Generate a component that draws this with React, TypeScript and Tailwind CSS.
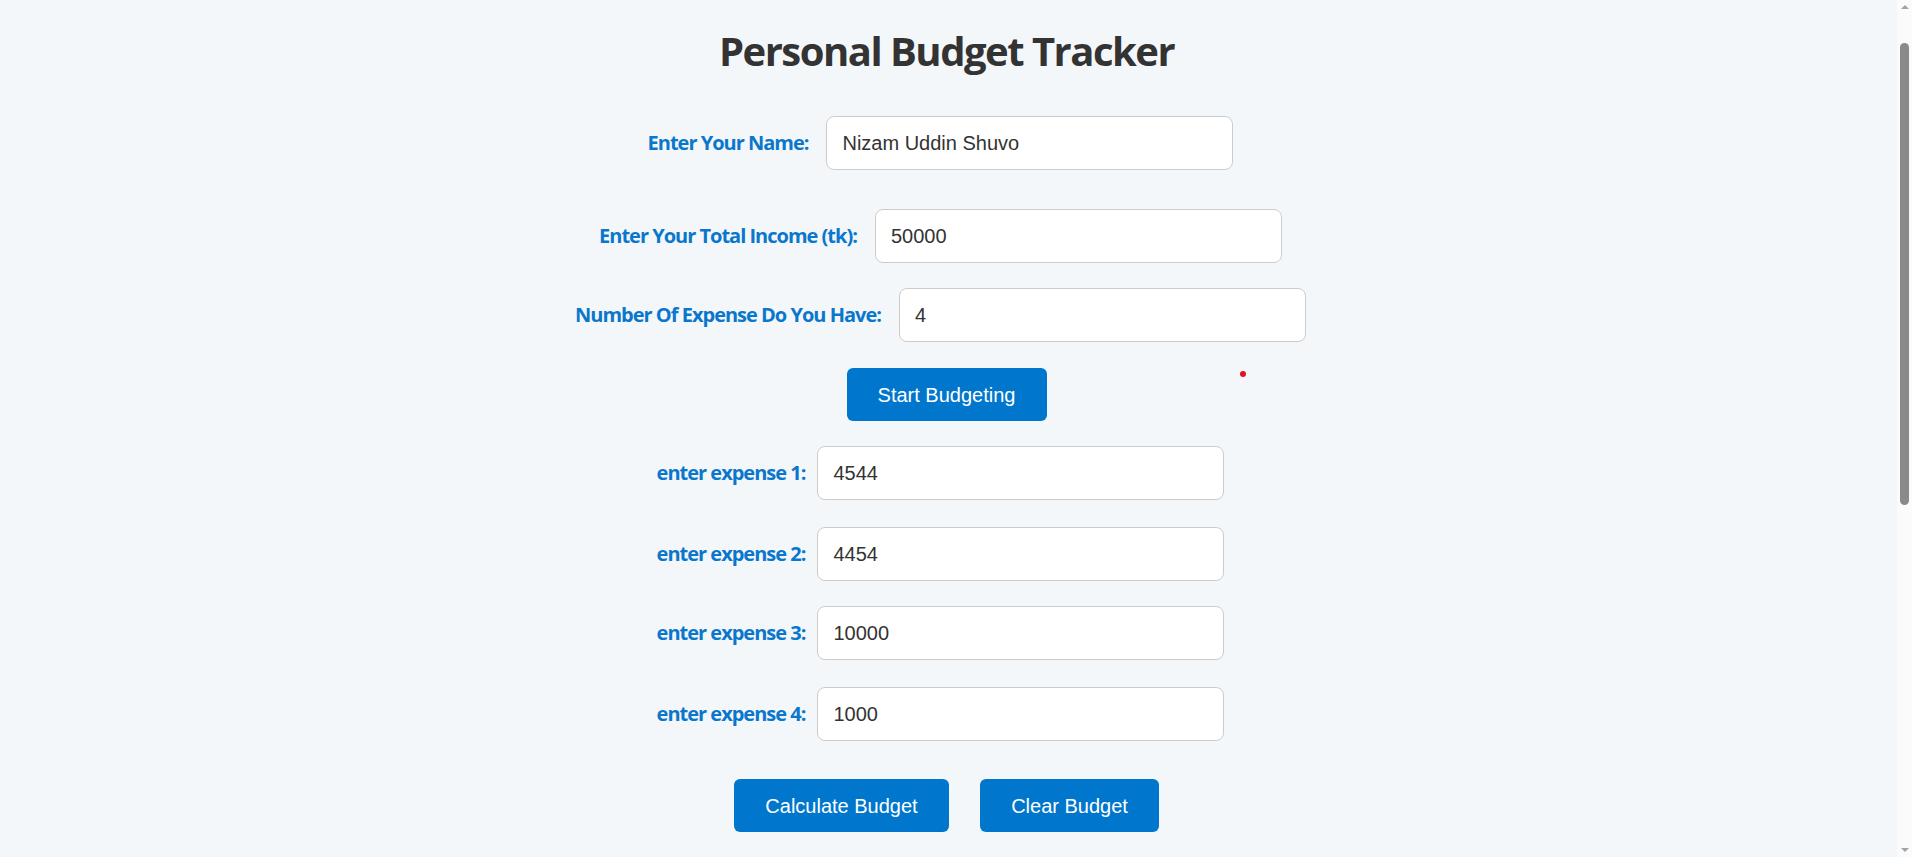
import React from "react";

const labelFont = { fontFamily: '"Open Sans", "Noto Sans", sans-serif' };
const arial = { fontFamily: '"Liberation Sans", Arial, sans-serif' };

function Row({
  label,
  value,
  gap,
  className,
}: {
  label: string;
  value: string;
  gap: string;
  className: string;
}) {
  return (
    <div className={`flex items-center justify-center pr-[12px] ${className}`}>
      <label
        className={`text-[20px] font-bold text-[#0a77cc] leading-[28px] tracking-[-1px] ${gap}`}
        style={labelFont}
      >
        {label}
      </label>
      <input
        readOnly
        value={value}
        className="h-[54px] w-[407px] rounded-[8px] border border-[#cccccc] bg-white px-[15px] text-[20px] text-[#333333] outline-none"
        style={arial}
      />
    </div>
  );
}

function Scrollbar() {
  return (
    <div className="flex h-full w-[15px] shrink-0 flex-col items-center bg-[#fcfbfb]">
      <div className="mt-[5px] h-0 w-0 border-x-[4px] border-b-[4px] border-x-transparent border-b-[#a3a3a3]" />
      <div className="mt-[34px] h-[462px] w-[9px] rounded-full bg-[#8a8a8a]" />
      <div className="flex-1" />
      <div className="mb-[5px] h-0 w-0 border-x-[4px] border-t-[4px] border-x-transparent border-t-[#a3a3a3]" />
    </div>
  );
}

export default function App() {
  return (
    <div className="flex h-screen overflow-hidden bg-[#f4f7fa]">
      <div className="relative flex-1 pr-[4px] pt-[27px]">
        <h1
          className="text-center text-[40px] font-bold leading-[48px] text-[#333333] tracking-[-1.5px]"
          style={labelFont}
        >
          Personal Budget Tracker
        </h1>

        <Row label="Enter Your Name:" value="Nizam Uddin Shuvo" gap="mr-[18px]" className="mt-[41px]" />
        <Row label="Enter Your Total Income (tk):" value="50000" gap="mr-[18px]" className="mt-[39px]" />
        <Row label="Number Of Expense Do You Have:" value="4" gap="mr-[18px]" className="mt-[25px]" />

        <div className="mt-[26px] flex justify-center">
          <button
            className="h-[53px] w-[200px] rounded-[6px] bg-[#0077cc] text-[20px] text-white"
            style={arial}
          >
            Start Budgeting
          </button>
        </div>

        <Row label="enter expense 1:" value="4544" gap="mr-[12px]" className="mt-[25px]" />
        <Row label="enter expense 2:" value="4454" gap="mr-[12px]" className="mt-[27px]" />
        <Row label="enter expense 3:" value="10000" gap="mr-[12px]" className="mt-[25px]" />
        <Row label="enter expense 4:" value="1000" gap="mr-[12px]" className="mt-[27px]" />

        <div className="mt-[38px] flex justify-center gap-[31px]">
          <button
            className="h-[53px] w-[215px] rounded-[6px] bg-[#0077cc] text-[20px] text-white"
            style={arial}
          >
            Calculate Budget
          </button>
          <button
            className="h-[53px] w-[179px] rounded-[6px] bg-[#0077cc] text-[20px] text-white"
            style={arial}
          >
            Clear Budget
          </button>
        </div>

        <div className="absolute left-[1240px] top-[371px] h-[6px] w-[6px] rounded-full bg-[#e4121c]" />
      </div>
      <Scrollbar />
    </div>
  );
}
